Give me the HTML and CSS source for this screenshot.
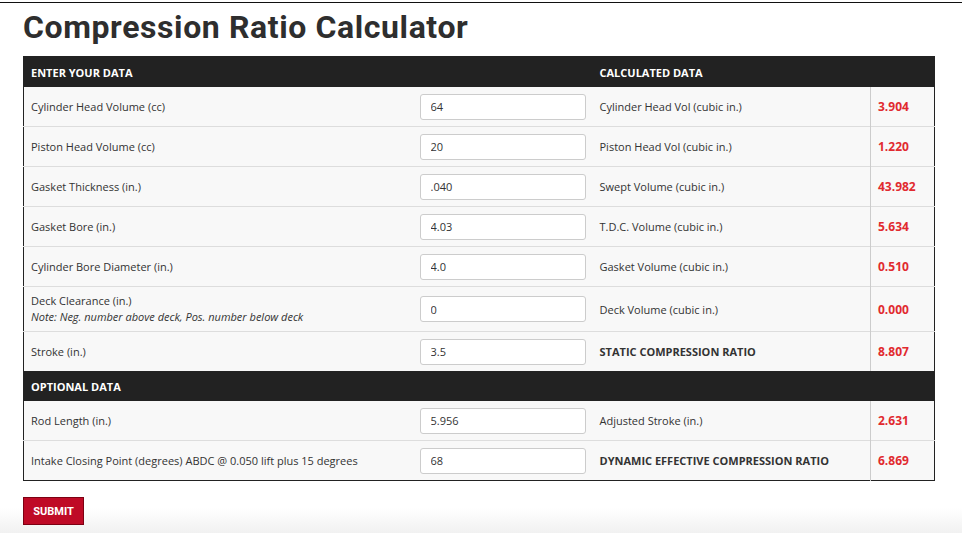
FILE: index.html
```html
<!DOCTYPE html>
<html lang="en">
<head>
    <meta charset="UTF-8">
    <meta name="viewport" content="width=device-width, initial-scale=1.0">
    <title>Compression Ratio Calculator</title>
    <link rel="stylesheet" href="styles.css">
</head>
<body>
    <div class="topline"></div>
    <div class="page">
        <h1>Compression Ratio Calculator</h1>
        <form id="calc">
            <table class="calc-table">
                <colgroup>
                    <col class="c-label">
                    <col class="c-input">
                    <col class="c-calc">
                    <col class="c-value">
                </colgroup>
                <tr class="head">
                    <th colspan="2">ENTER YOUR DATA</th>
                    <th colspan="2">CALCULATED DATA</th>
                </tr>
                <tr>
                    <td>Cylinder Head Volume (cc)</td>
                    <td class="in"><input type="text" value="64"></td>
                    <td>Cylinder Head Vol (cubic in.)</td>
                    <td class="val">3.904</td>
                </tr>
                <tr>
                    <td>Piston Head Volume (cc)</td>
                    <td class="in"><input type="text" value="20"></td>
                    <td>Piston Head Vol (cubic in.)</td>
                    <td class="val">1.220</td>
                </tr>
                <tr>
                    <td>Gasket Thickness (in.)</td>
                    <td class="in"><input type="text" value=".040"></td>
                    <td>Swept Volume (cubic in.)</td>
                    <td class="val">43.982</td>
                </tr>
                <tr>
                    <td>Gasket Bore (in.)</td>
                    <td class="in"><input type="text" value="4.03"></td>
                    <td>T.D.C. Volume (cubic in.)</td>
                    <td class="val">5.634</td>
                </tr>
                <tr>
                    <td>Cylinder Bore Diameter (in.)</td>
                    <td class="in"><input type="text" value="4.0"></td>
                    <td>Gasket Volume (cubic in.)</td>
                    <td class="val">0.510</td>
                </tr>
                <tr class="tall">
                    <td>Deck Clearance (in.)<br><em>Note: Neg. number above deck, Pos. number below deck</em></td>
                    <td class="in"><input type="text" value="0"></td>
                    <td>Deck Volume (cubic in.)</td>
                    <td class="val">0.000</td>
                </tr>
                <tr>
                    <td>Stroke (in.)</td>
                    <td class="in"><input type="text" value="3.5"></td>
                    <td class="strong">STATIC COMPRESSION RATIO</td>
                    <td class="val">8.807</td>
                </tr>
                <tr class="head">
                    <th colspan="4">OPTIONAL DATA</th>
                </tr>
                <tr>
                    <td>Rod Length (in.)</td>
                    <td class="in"><input type="text" value="5.956"></td>
                    <td>Adjusted Stroke (in.)</td>
                    <td class="val">2.631</td>
                </tr>
                <tr>
                    <td>Intake Closing Point (degrees) ABDC @ 0.050 lift plus 15 degrees</td>
                    <td class="in"><input type="text" value="68"></td>
                    <td class="strong">DYNAMIC EFFECTIVE COMPRESSION RATIO</td>
                    <td class="val">6.869</td>
                </tr>
            </table>
            <button type="button" class="submit">SUBMIT</button>
        </form>
    </div>
</body>
</html>
```

FILE: styles.css
```css
html {
    background: #fff;
}
body {
    margin: 0;
    padding: 0;
    font-family: 'Open Sans', sans-serif;
    color: #333;
    min-height: 533px;
    background: linear-gradient(to bottom, #fff 508px, #f1f1f1 533px);
}
.topline {
    margin-top: 2px;
    height: 1px;
    background-color: #111;
}
.page {
    padding: 0 27px 0 23px;
}
h1 {
    font-family: 'Roboto', sans-serif;
    font-weight: 700;
    font-size: 32px;
    letter-spacing: 0.6px;
    line-height: 40px;
    color: #2e2e2e;
    margin: 4px 0 9px;
}
.calc-table {
    width: 912px;
    border-collapse: collapse;
    table-layout: fixed;
    border: 1px solid #222;
    font-size: 11px;
}
.c-label { width: 387px; }
.c-input { width: 182px; }
.c-calc { width: 278px; }
.c-value { width: 64px; }
.calc-table th {
    background-color: #222;
    color: #fff;
    font-weight: 700;
    text-align: left;
    height: 30px;
    padding: 0 7px;
}
.calc-table td {
    background-color: #f8f8f8;
    border-top: 1px solid #ddd;
    height: 39px;
    padding: 0 7px;
    color: #333;
}
.calc-table tr.head + tr td {
    border-top: none;
}
.calc-table tr.tall td {
    height: 44px;
}
.calc-table em {
    font-size: 11px;
    line-height: 17px;
}
.calc-table td.in {
    padding: 0 7px 0 9px;
}
.calc-table td.strong {
    font-weight: 700;
}
.calc-table td.val {
    border-left: 1px solid #ccc;
    color: #e12a2f;
    font-weight: 700;
    font-size: 12px;
}
input[type="text"] {
    width: 166px;
    height: 26px;
    box-sizing: border-box;
    border: 1px solid #ccc;
    border-radius: 3px;
    background: #fff;
    padding: 0 10px;
    font-family: 'Open Sans', sans-serif;
    font-size: 11px;
    color: #333;
}
.submit {
    margin-top: 16px;
    width: 61px;
    height: 28px;
    background-color: #bf0a26;
    border: 1px solid #7d0012;
    color: #fff;
    font-family: 'Roboto', sans-serif;
    font-weight: 700;
    font-size: 11px;
    padding: 0;
    cursor: pointer;
}
```
